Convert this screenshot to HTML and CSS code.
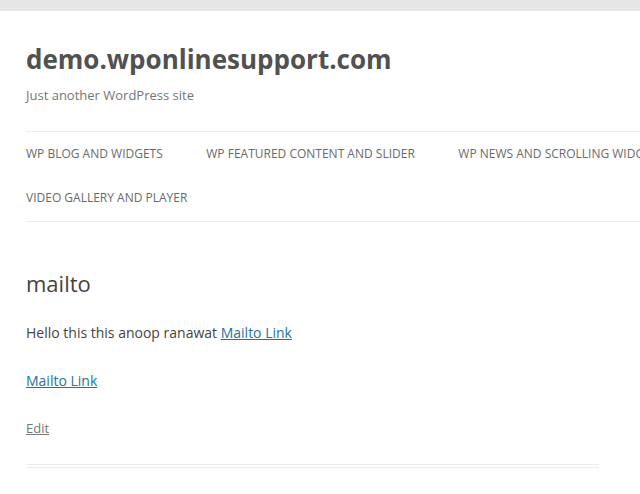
FILE: index.html
```html
<!DOCTYPE html>
<html lang="en">
<head>
<meta charset="utf-8">
<title>mailto | demo.wponlinesupport.com</title>
<link rel="stylesheet" href="styles.css">
</head>
<body>
<div class="site">
  <header class="site-header">
    <h1 class="site-title">demo.wponlinesupport.com</h1>
    <h2 class="site-description">Just another WordPress site</h2>
    <nav class="main-navigation">
      <ul class="nav-menu">
        <li><a href="#">WP Blog and Widgets</a></li>
        <li><a href="#">WP Featured Content and Slider</a></li>
        <li><a href="#">WP News and Scrolling Widgets</a></li>
        <li><a href="#">Video Gallery and Player</a></li>
      </ul>
    </nav>
  </header>
  <main class="site-content">
    <article class="page">
      <h1 class="entry-title">mailto</h1>
      <div class="entry-content">
        <p>Hello this this anoop ranawat <a href="#">Mailto Link</a></p>
        <p><a href="#">Mailto Link</a></p>
      </div>
      <footer class="entry-meta"><a href="#" class="edit-link">Edit</a></footer>
    </article>
  </main>
</div>
</body>
</html>
```
FILE: styles.css
```css
html, body {
  margin: 0;
  padding: 0;
  overflow: hidden;
}
body {
  background: #e6e6e6;
  font-family: "Open Sans", "Liberation Sans", sans-serif;
  color: #444;
  height: 494px;
}
.site {
  margin-top: 11px;
  background: #fff;
  padding: 0 26px;
  width: 880px;
  height: 600px;
}
.site-header {
  padding: 24px 0;
}
.site-title {
  margin: 0;
  font-size: 26px;
  line-height: 48px;
  font-weight: 700;
  color: #515151;
}
.site-description {
  margin: 0;
  font-size: 13px;
  line-height: 24px;
  font-weight: 400;
  color: #757575;
}
.main-navigation {
  margin-top: 24px;
  border-top: 1px solid #ededed;
  border-bottom: 1px solid #ededed;
  width: 800px;
}
.nav-menu {
  list-style: none;
  margin: 0;
  padding: 0;
  display: flex;
  flex-wrap: wrap;
}
.nav-menu li {
  margin-right: 43.5px;
  font-size: 12px;
  line-height: 44.3px;
  text-transform: uppercase;
  white-space: nowrap;
}
.nav-menu a {
  color: #6a6a6a;
  text-decoration: none;
}
.site-content {
  margin-top: 25px;
  width: 573px;
}
.page {
  padding-bottom: 24px;
  border-bottom: 4px double #ededed;
}
.entry-title {
  margin: 0 0 26px;
  font-size: 22px;
  line-height: 24px;
  font-weight: 400;
  color: #444;
}
.entry-content p {
  margin: 0 0 24px;
  font-size: 14px;
  line-height: 24px;
}
.entry-content a {
  color: #21759b;
  text-decoration: underline;
}
.entry-meta {
  margin-top: -1px;
  font-size: 13px;
  line-height: 24px;
}
.edit-link {
  color: #757575;
  text-decoration: underline;
}
```
